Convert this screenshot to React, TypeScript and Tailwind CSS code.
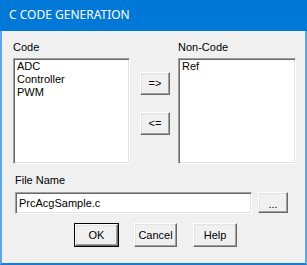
import React from "react";

const sunken =
  "bg-white border border-t-[#a0a0a0] border-l-[#a0a0a0] border-b-white border-r-white shadow-[inset_1px_1px_0_#696969,inset_-1px_-1px_0_#e3e3e3]";

const raised =
  "bg-[#f0f0f0] border border-t-white border-l-white border-b-[#696969] border-r-[#696969] shadow-[inset_-1px_-1px_0_#a0a0a0,inset_1px_1px_0_#e3e3e3] flex items-center justify-center text-black";

function ListBox({ items }: { items: string[] }) {
  return (
    <div className={`${sunken} w-full h-[106px] px-[3px] py-[1px]`}>
      {items.map((it) => (
        <div key={it} className="leading-[13px]">
          {it}
        </div>
      ))}
    </div>
  );
}

export default function App() {
  return (
    <div
      className="w-[307px] h-[265px] flex flex-col text-[11px] text-black border-l-2 border-r-2 border-b-2 border-l-[#5fa4e6] border-r-[#5fa4e6] border-b-[#1a7ad8]"
      style={{ fontFamily: '"Liberation Sans", Arial, sans-serif' }}
    >
      <div
        className="h-[31px] -mx-[2px] bg-[#0078d7] text-white text-[12px] flex items-center pl-[9px] pb-[1px]"
        style={{ fontFamily: '"Noto Sans", "Open Sans", sans-serif' }}
      >
        C CODE GENERATION
      </div>

      <div className="flex-1 bg-[#f0f0f0] flex flex-col pl-[11px] pr-[9px] pt-[10px]">
        <div className="flex">
          <div className="w-[117px] flex flex-col">
            <div className="leading-[13px] mb-[4px]">Code</div>
            <ListBox items={["ADC", "Controller", "PWM"]} />
          </div>

          <div className="flex flex-col ml-[10px] pt-[31px] gap-[17px]">
            <button className={`${raised} w-[30px] h-[23px]`}>=&gt;</button>
            <button className={`${raised} w-[30px] h-[23px]`}>&lt;=</button>
          </div>

          <div className="w-[118px] flex flex-col ml-[8px]">
            <div className="leading-[13px] mb-[4px]">Non-Code</div>
            <ListBox items={["Ref"]} />
          </div>
        </div>

        <div className="pl-[2px] mt-[10px]">
          <div className="leading-[13px] mb-[5px]">File Name</div>
          <div className="flex items-start">
            <div className={`${sunken} w-[237px] h-[22px] flex items-center px-[3px]`}>
              PrcAcgSample.c
            </div>
            <button className={`${raised} ml-[6px] w-[30px] h-[21px] text-[#555] pt-[4px]`}>...</button>
          </div>
        </div>

        <div className="flex pl-[61px] mt-[9px] gap-[15px]">
          <button className="w-[45px] h-[24px] border border-black flex">
            <span className={`${raised} flex-1`}>OK</span>
          </button>
          <button className={`${raised} w-[43px] h-[24px]`}>Cancel</button>
          <button className={`${raised} w-[44px] h-[24px] ml-[1px]`}>Help</button>
        </div>
      </div>
    </div>
  );
}
